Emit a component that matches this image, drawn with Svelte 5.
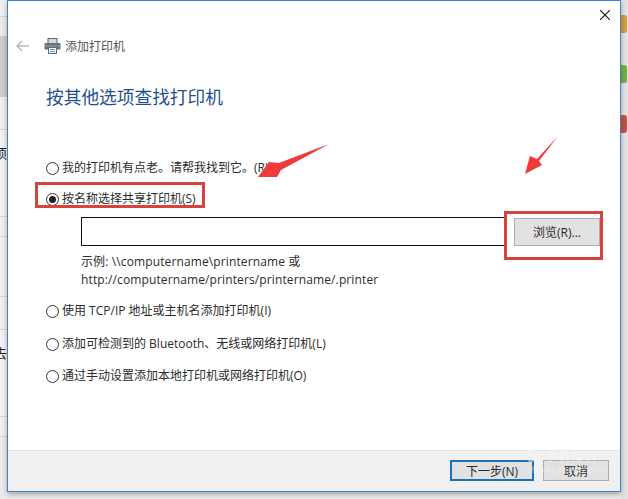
<script>
  const sideRows = [
    { h: 17, c: 'line' }, { h: 19, c: 'b' }, { h: 61, c: 'band' }, { h: 33, c: 'line' },
    { h: 87, c: 'txt', t: '项' }, { h: 20, c: 'line' }, { h: 60, c: 'line' }, { h: 33, c: 'line' },
    { h: 87, c: 'txt', t: '去' }, { h: 20, c: 'line' }, { h: 62, c: 'b' }
  ];
</script>

<div class="page">
  <div class="left">
    {#each sideRows as r}
      <div class="seg {r.c}" style="height:{r.h}px">{#if r.t}<span>{r.t}</span>{/if}</div>
    {/each}
  </div>

  <div class="dialog">
    <div class="close" aria-label="关闭">
      <svg width="10" height="10" viewBox="0 0 10 10"><path d="M0 0 10 10M10 0 0 10" stroke="#111" stroke-width="1.1" fill="none"/></svg>
    </div>

    <header class="head">
      <svg class="back" width="13" height="12" viewBox="0 0 13 12"><path d="M6 1 1 6l5 5M1 6h12" stroke="#b9b9b9" stroke-width="1.5" fill="none"/></svg>
      <svg class="printer" width="17" height="16" viewBox="0 0 17 16">
        <rect x="4" y="0.5" width="9" height="5" fill="#d8d8d8" stroke="#5f6468"/>
        <path d="M1.5 5h14a1 1 0 0 1 1 1v5.500h-16V6a1 1 0 0 1 1-1z" fill="#6c7177"/>
        <rect x="1" y="7.500" width="15" height="1" fill="#9aa0a5"/>
        <rect x="4.500" y="9.500" width="8" height="6" fill="#fff" stroke="#4d6f8d"/>
        <path d="M6 11.500h5M6 13.500h5" stroke="#5a9bc9"/>
      </svg>
      <span class="title">添加打印机</span>
    </header>

    <h1>按其他选项查找打印机</h1>

    <div class="opt o1"><i class="radio"></i><span>我的打印机有点老。请帮我找到它。(R)</span></div>
    <div class="opt o2"><i class="radio on"></i><span>按名称选择共享打印机(S)</span></div>

    <div class="field">
      <div class="input"></div>
      <button class="browse">浏览(R)...</button>
    </div>

    <p class="hint">示例: \\computername\printername 或<br />http://computername/printers/printername/.printer</p>

    <div class="opt o3"><i class="radio"></i><span>使用 TCP/IP 地址或主机名添加打印机(I)</span></div>
    <div class="opt o4"><i class="radio"></i><span>添加可检测到的 Bluetooth、无线或网络打印机(L)</span></div>
    <div class="opt o5"><i class="radio"></i><span>通过手动设置添加本地打印机或网络打印机(O)</span></div>

    <footer>
      <button class="next">下一步(N)</button>
      <button class="cancel">取消</button>
    </footer>
  </div>

  <div class="right">
    <b class="tab orange"></b>
    <b class="tab green"></b>
    <b class="tab red"></b>
  </div>

  <svg class="marks" width="628" height="499" viewBox="0 0 628 499">
    <g fill="#ee3a3a">
      <path d="M329 144 279 163 269 162 258 177 277 177 281 170Z" />
      <path d="M558 136 537 159 530 156 525 174 542 165 539 161Z" />
    </g>
    <g fill="none" stroke="#d8423f" stroke-width="3">
      <rect x="36.500" y="183.500" width="167" height="23" />
      <rect x="505.500" y="212.500" width="96" height="46" />
    </g>
  </svg>

  <div class="wm"><strong>S</strong><span>手机知识</span><em>zhishi.sogou.com</em></div>
</div>

<style>
  :global(body) { margin: 0; background: #e9e9e9; }
  .page {
    position: relative;
    width: 628px;
    height: 499px;
    overflow: hidden;
    display: grid;
    grid-template-columns: 7px 614px 7px;
    font-family: "Open Sans", "Noto Sans CJK SC", sans-serif;
    font-size: 12px;
    color: #2b2b2b;
  }
  .left { display: flex; flex-direction: column; overflow: hidden; background: #ececec; }
  .seg { box-sizing: border-box; overflow: hidden; position: relative; flex: none; }
  .seg.b { background: #ebebeb; }
  .seg.band { background: #cdcdcd; }
  .seg.line { background: #efefef; border-bottom: 1px solid #d6d6d6; }
  .seg.txt { background: #f2f2f2; border-bottom: 1px solid #d6d6d6; }
  .seg.txt span { display: block; font-size: 13px; line-height: 15px; margin: 16px 0 0 -6px; color: #222; white-space: nowrap; }

  .dialog {
    position: relative;
    box-sizing: border-box;
    height: 492px;
    background: #fff;
    border: 1px solid #3d85c4;
    box-shadow: 0 2px 5px rgba(0, 0, 0, .3);
    display: flex;
    flex-direction: column;
  }
  .close { position: absolute; top: 9px; left: 592px; line-height: 0; }

  .head { display: flex; align-items: center; height: 20px; margin: 35px 0 0 8px; }
  .back { margin-right: 15px; }
  .printer { margin-right: 4px; }
  .title { color: #555; }
  h1 {
    margin: 29px 0 0 38px;
    height: 24px;
    line-height: 24px;
    font-size: 17.700px;
    font-weight: 400;
    color: #1f4f8f;
  }
  .opt { display: flex; align-items: center; height: 20px; margin-left: 38px; gap: 3px; white-space: nowrap; }
  .opt span { margin-bottom: 3px; }
  .o1 { margin-top: 49px; }
  .o2 { margin-top: 11px; }
  .o3 { margin-top: 12px; }
  .o4 { margin-top: 13px; }
  .o5 { margin-top: 12px; }
  .radio {
    box-sizing: border-box;
    width: 13px;
    height: 13px;
    margin-top: 1px;
    border: 1px solid #333;
    border-radius: 50%;
    background: #fff;
    display: flex;
    align-items: center;
    justify-content: center;
  }
  .radio.on::after { content: ""; width: 7px; height: 7px; border-radius: 50%; background: #222; }

  .field { display: flex; align-items: center; height: 29px; margin: 8px 0 0 73px; }
  .input { box-sizing: border-box; width: 424px; height: 29px; border: 1px solid #111; background: #fff; }
  button { font: inherit; color: #2b2b2b; padding: 0; border-radius: 0; }
  .browse {
    box-sizing: border-box;
    width: 86px;
    height: 28px;
    margin-left: 9px;
    background: #e1e1e1;
    border: 1px solid #adadad;
  }
  .hint { margin: 7px 0 0 73px; line-height: 18px; letter-spacing: .12px; }

  footer {
    margin-top: auto;
    height: 41px;
    box-sizing: border-box;
    padding: 9px 11px 0 0;
    background: #f0f0f0;
    border-top: 1px solid #e4e4e4;
    display: flex;
    justify-content: flex-end;
    gap: 9px;
  }
  .next, .cancel { box-sizing: border-box; height: 21px; background: #e1e1e1; }
  .next { width: 84px; border: 2px solid #1a73b8; }
  .cancel { width: 66px; border: 1px solid #adadad; }

  .right { display: flex; flex-direction: column; background: #e2e2e2; padding-top: 15px; gap: 32px; }
  .tab { display: block; width: 6px; height: 18px; border-radius: 0 3px 3px 0; }
  .orange { background: #d99a3c; }
  .green { background: #74b13c; }
  .red { background: #c8503f; }

  .marks { position: absolute; inset: 0; pointer-events: none; }
  .wm { position: absolute; left: 527px; top: 446px; width: 90px; height: 32px; color: #fff; opacity: .45; pointer-events: none; }
  .wm strong { position: absolute; left: 0; top: 0; font-size: 17px; line-height: 20px; }
  .wm span { position: absolute; left: 18px; top: 3px; font-size: 12px; line-height: 15px; letter-spacing: 1px; }
  .wm em { position: absolute; left: 0; top: 18px; font-size: 9px; line-height: 12px; font-style: normal; letter-spacing: .5px; }
</style>
